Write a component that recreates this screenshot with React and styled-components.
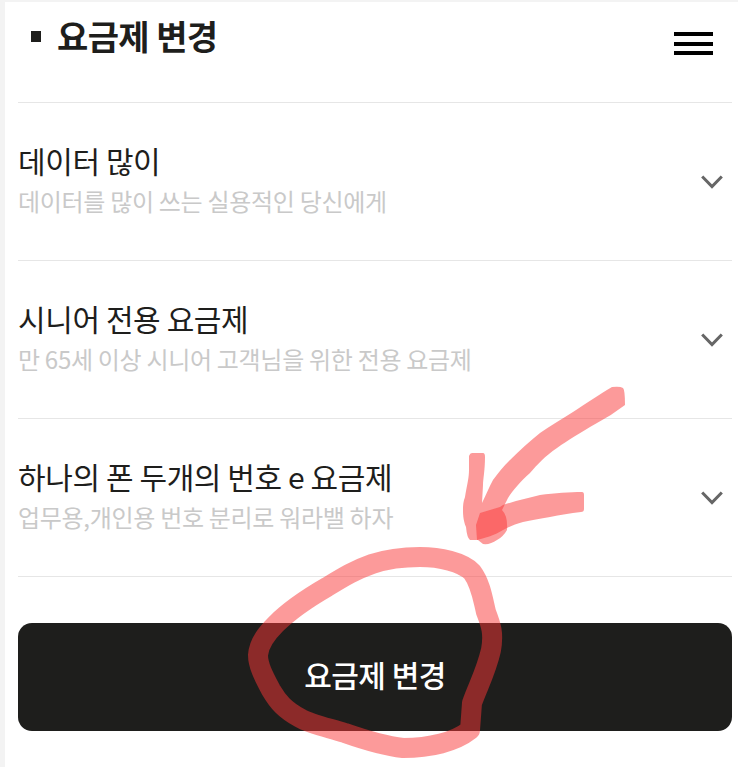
import React from "react";
import styled, { createGlobalStyle } from "styled-components";

const Global = createGlobalStyle`
  html, body { margin: 0; padding: 0; background: #f3f3f3; }
  body { font-family: "Noto Sans CJK KR", "Noto Sans", sans-serif; }
`;

const Page = styled.div`
  position: relative;
  width: 738px;
  height: 767px;
  overflow: hidden;
  box-sizing: border-box;
  padding: 2px 0 0 5px;
`;

const Panel = styled.main`
  background: #fff;
  height: 765px;
  padding: 0 6px 0 13px;
  display: flex;
  flex-direction: column;
`;

const Header = styled.header`
  height: 100px;
  display: flex;
  justify-content: space-between;
  align-items: flex-start;
  border-bottom: 1px solid #e6e6e6;
`;

const Title = styled.h1`
  margin: 9px 0 0 13px;
  display: flex;
  align-items: center;
  gap: 16px;
  font-size: 34px;
  line-height: 50px;
  letter-spacing: -0.6px;
  font-weight: 700;
  color: #1e1e1c;
  &::before {
    content: "";
    width: 10px;
    height: 11px;
    background: #1e1e1c;
  }
`;

const Burger = styled.button`
  margin: 30px 19px 0 0;
  padding: 0;
  width: 39px;
  height: 23px;
  border: 0;
  background: none;
  display: flex;
  flex-direction: column;
  justify-content: space-between;
  span {
    display: block;
    height: 4px;
    flex: none;
    background: #000;
  }
`;

const Row = styled.section`
  height: 157px;
  display: flex;
  align-items: center;
  justify-content: space-between;
  border-bottom: 1px solid #e6e6e6;
`;

const RowText = styled.div`
  display: flex;
  flex-direction: column;
  gap: 4px;
  margin-top: -3px;
`;

const RowTitle = styled.div`
  font-size: 30px;
  line-height: 38px;
  letter-spacing: -0.4px;
  font-weight: 400;
  color: #1e1e1c;
`;

const RowSub = styled.div`
  font-size: 24px;
  line-height: 36px;
  letter-spacing: -0.3px;
  font-weight: 400;
  color: #c9c9c9;
`;

const Chevron = styled.svg`
  width: 22px;
  height: 14px;
  margin-right: 9px;
  fill: none;
  stroke: #666;
  stroke-width: 3;
`;

const Cta = styled.button`
  margin-top: 46px;
  padding: 0 0 6px;
  height: 108px;
  border: 0;
  border-radius: 14px;
  background: #1e1e1c;
  color: #fff;
  font-family: inherit;
  font-size: 30px;
  font-weight: 500;
  letter-spacing: -0.5px;
`;

const Ink = styled.svg`
  position: absolute;
  left: 0;
  top: 0;
  width: 738px;
  height: 767px;
  pointer-events: none;
  fill: none;
`;

const Marker = styled.path`
  fill: rgb(250, 53, 53);
  fill-opacity: 0.5;
`;

const Ring = styled.path`
  stroke: rgb(250, 53, 53);
  stroke-opacity: 0.5;
  stroke-width: 20;
  stroke-linejoin: round;
`;

const rows = [
  ["데이터 많이", "데이터를 많이 쓰는 실용적인 당신에게"],
  ["시니어 전용 요금제", "만 65세 이상 시니어 고객님을 위한 전용 요금제"],
  ["하나의 폰 두개의 번호 e 요금제", "업무용,개인용 번호 분리로 워라밸 하자"],
];

export default function App() {
  return (
    <Page>
      <Global />
      <Panel>
        <Header>
          <Title>요금제 변경</Title>
          <Burger aria-label="메뉴">
            <span />
            <span />
            <span />
          </Burger>
        </Header>
        {rows.map(([title, sub]) => (
          <Row key={title}>
            <RowText>
              <RowTitle>{title}</RowTitle>
              <RowSub>{sub}</RowSub>
            </RowText>
            <Chevron viewBox="0 0 22 14">
              <path d="M1.2 1.5 L11 11.5 L20.8 1.5" />
            </Chevron>
          </Row>
        ))}
        <Cta>요금제 변경</Cta>
      </Panel>
      <Ink viewBox="0 0 738 767">
        <Marker d="M612 387 Q620 386 623 388 Q625 390 625 405 Q612 415 597 423 C580 433 568 440 557 448 C545 456 537 465 530 473 C520 482 513 490 508 498 L502 510 Q508 516 507 530 Q503 537 497 540 Q490 545 483 544 L478 540 L470 540 Q467 538 466 527 C463 520 463 513 463 510 C463 503 464 500 465 497 C467 485 469 478 469 470 L469 456 Q470 453 472 453 L483 453 Q485 453 485 457 C485 470 483 480 483 485 L482 503 C486 495 489 487 493 480 C498 473 503 467 510 460 C520 450 530 441 540 433 C550 426 562 419 573 412 C585 404 600 394 612 387 Z" />
        <Marker d="M582 492 Q584 492 584 495 L584 509 Q584 512 581 512 C570 513 560 515 550 517 C540 519 531 520 523 522 C515 524 509 527 503 530 C495 535 485 538 477 540 L476 525 L480 513 L500 507 L503 505 C515 501 528 498 540 495 C555 493 570 492 582 492 Z" />
        <Ring d="M420 557 C440 557 462 562 472 572 C481 584 483 600 486 612 C491 625 494 633 491 650 C486 672 478 686 472 703 L470 730 C455 742 430 748 403 748 C385 746 365 740 345 733 C325 727 310 724 300 718 C285 710 278 702 271 690 C263 675 258 665 258 655 C259 642 268 632 276 624 C290 610 308 598 327 587 C345 576 355 570 372 564 C390 558 405 557 420 557 Z" />
      </Ink>
    </Page>
  );
}
